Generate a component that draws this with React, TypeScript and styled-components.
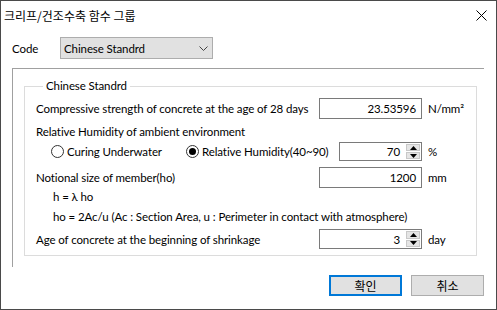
import React, { useState } from 'react'
import styled, { createGlobalStyle } from 'styled-components'

const GlobalStyle = createGlobalStyle`
  html, body { margin: 0; padding: 0; background: #ffffff; }
  body {
    font-family: Lato, "Noto Sans", "Noto Sans CJK KR", sans-serif;
    font-size: 11.5px;
    letter-spacing: -0.1px;
    color: #000;
  }
  * { box-sizing: border-box; }
`

const Window = styled.div`
  width: 497px;
  height: 310px;
  background: #fff;
  border: 1px solid #4a4a4a;
  display: flex;
  flex-direction: column;
`

const TitleBar = styled.div`
  height: 28px;
  display: flex;
  align-items: center;
  justify-content: space-between;
  padding: 0 9px 0 3px;
  font-family: "Noto Sans CJK KR", sans-serif;
  font-size: 12px;
  letter-spacing: 0;
`

const CloseButton = styled.div`
  width: 12px;
  height: 12px;
  display: flex;
  align-items: center;
  justify-content: center;
`

const CodeRow = styled.div`
  display: flex;
  align-items: center;
  margin-top: 8px;
  padding-left: 11px;
  height: 22px;
`

const CodeLabel = styled.span`
  width: 48px;
`

const Combo = styled.div`
  width: 153px;
  height: 22px;
  background: #e1e1e1;
  border: 1px solid #adadad;
  display: flex;
  align-items: center;
  justify-content: space-between;
  padding: 0 4px 0 3px;
`

const Panel = styled.div`
  margin: 9px 12px 0 11px;
  height: 199px;
  border-top: 1px solid #a0a0a0;
  border-left: 1px solid #a0a0a0;
  padding: 9px 7px 0 11px;
`

const Group = styled.fieldset`
  margin: 0;
  min-width: 0;
  padding: 0 0 6px 11px;
  border: 1px solid #dcdcdc;
  display: flex;
  flex-direction: column;
`

const Legend = styled.legend`
  padding: 0 3px;
  margin-left: 7px;
  line-height: 16px;
`

const Row = styled.div<{ $h: number; $mt: number; $indent?: number }>`
  height: ${p => p.$h}px;
  margin-top: ${p => p.$mt}px;
  padding-left: ${p => p.$indent ?? 0}px;
  display: flex;
  align-items: center;
`

const Label = styled.span`
  flex: 1;
  min-width: 0;
  white-space: nowrap;
`

const TextField = styled.div<{ $w: number; $h: number }>`
  width: ${p => p.$w}px;
  height: ${p => p.$h}px;
  border: 1px solid #7a7a7a;
  background: #fff;
  display: flex;
  align-items: center;
  justify-content: flex-end;
  padding-right: 5px;
  flex-shrink: 0;
`

const SpinBox = styled.div`
  display: flex;
  align-items: stretch;
  flex-shrink: 0;
`

const SpinButtons = styled.div`
  width: 17px;
  display: flex;
  flex-direction: column;
  border: 1px solid #7a7a7a;
  border-left: none;
  background: #fff;
  padding: 1px;
  gap: 1px;
`

const SpinHalf = styled.div`
  flex: 1;
  background: #e5e5e5;
  border: 1px solid #c8c8c8;
  display: flex;
  align-items: center;
  justify-content: center;
`

const Unit = styled.span`
  width: 54px;
  padding-left: 6px;
  white-space: nowrap;
  flex-shrink: 0;
`

const RadioGroup = styled.div`
  display: flex;
  align-items: center;
  flex: 1;
  padding-left: 15px;
`

const RadioItem = styled.label<{ $w: number }>`
  width: ${p => p.$w}px;
  display: flex;
  align-items: center;
  gap: 3px;
  white-space: nowrap;
`

const RadioCircle = styled.span<{ $on: boolean }>`
  width: 13px;
  height: 13px;
  border-radius: 50%;
  border: 1px solid #333;
  background: #fff;
  display: flex;
  align-items: center;
  justify-content: center;
  &::after {
    content: '';
    width: 7px;
    height: 7px;
    border-radius: 50%;
    background: ${p => (p.$on ? '#000' : 'transparent')};
  }
`

const Footer = styled.div`
  display: flex;
  justify-content: flex-end;
  gap: 9px;
  padding: 8px 12px 0 0;
`

const Button = styled.button<{ $primary?: boolean }>`
  width: 73px;
  height: 21px;
  background: #e1e1e1;
  border: ${p => (p.$primary ? '2px solid #0078d7' : '1px solid #adadad')};
  font-family: "Noto Sans CJK KR", sans-serif;
  font-size: 12px;
  color: #000;
  padding: 0;
  display: flex;
  align-items: center;
  justify-content: center;
`

const Arrow = ({ up }: { up?: boolean }) => (
  <svg width="7" height="4" viewBox="0 0 7 4">
    <path d={up ? 'M0 4 L3.5 0 L7 4 Z' : 'M0 0 L3.5 4 L7 0 Z'} fill="#000" />
  </svg>
)

const Spinner = ({ value, w, h }: { value: string; w: number; h: number }) => (
  <SpinBox>
    <TextField $w={w} $h={h} style={{ borderRight: 'none' }}>{value}</TextField>
    <SpinButtons>
      <SpinHalf><Arrow up /></SpinHalf>
      <SpinHalf><Arrow /></SpinHalf>
    </SpinButtons>
  </SpinBox>
)

export default function App() {
  const [mode, setMode] = useState<'water' | 'rh'>('rh')

  return (
    <>
      <GlobalStyle />
      <Window>
        <TitleBar>
          <span>크리프/건조수축 함수 그룹</span>
          <CloseButton>
            <svg width="11" height="11" viewBox="0 0 11 11">
              <path d="M0.5 0.5 L10.5 10.5 M10.5 0.5 L0.5 10.5" stroke="#000" strokeWidth="1" />
            </svg>
          </CloseButton>
        </TitleBar>

        <CodeRow>
          <CodeLabel>Code</CodeLabel>
          <Combo>
            <span>Chinese Standrd</span>
            <svg width="9" height="5" viewBox="0 0 9 5">
              <path d="M0.5 0.5 L4.5 4.5 L8.5 0.5" stroke="#444" fill="none" strokeWidth="1" />
            </svg>
          </Combo>
        </CodeRow>

        <Panel>
          <Group>
            <Legend>Chinese Standrd</Legend>
            <Row $h={21} $mt={4}>
              <Label>Compressive strength of concrete at the age of 28 days</Label>
              <TextField $w={103} $h={21}>23.53596</TextField>
              <Unit>N/mm²</Unit>
            </Row>
            <Row $h={18} $mt={3}>
              <Label>Relative Humidity of ambient environment</Label>
            </Row>
            <Row $h={19} $mt={2}>
              <RadioGroup>
                <RadioItem $w={135} onClick={() => setMode('water')}>
                  <RadioCircle $on={mode === 'water'} />
                  Curing Underwater
                </RadioItem>
                <RadioItem $w={150} onClick={() => setMode('rh')}>
                  <RadioCircle $on={mode === 'rh'} />
                  Relative Humidity(40~90)
                </RadioItem>
              </RadioGroup>
              <Spinner value="70" w={66} h={19} />
              <Unit>%</Unit>
            </Row>
            <Row $h={21} $mt={6}>
              <Label>Notional size of member(ho)</Label>
              <TextField $w={103} $h={21}>1200</TextField>
              <Unit>mm</Unit>
            </Row>
            <Row $h={16} $mt={0} $indent={17}>
              <Label>h = λ ho</Label>
            </Row>
            <Row $h={16} $mt={4} $indent={17}>
              <Label>ho = 2Ac/u (Ac : Section Area, u : Perimeter in contact with atmosphere)</Label>
            </Row>
            <Row $h={20} $mt={5}>
              <Label>Age of concrete at the beginning of shrinkage</Label>
              <Spinner value="3" w={86} h={20} />
              <Unit>day</Unit>
            </Row>
          </Group>
        </Panel>

        <Footer>
          <Button $primary>확인</Button>
          <Button>취소</Button>
        </Footer>
      </Window>
    </>
  )
}
